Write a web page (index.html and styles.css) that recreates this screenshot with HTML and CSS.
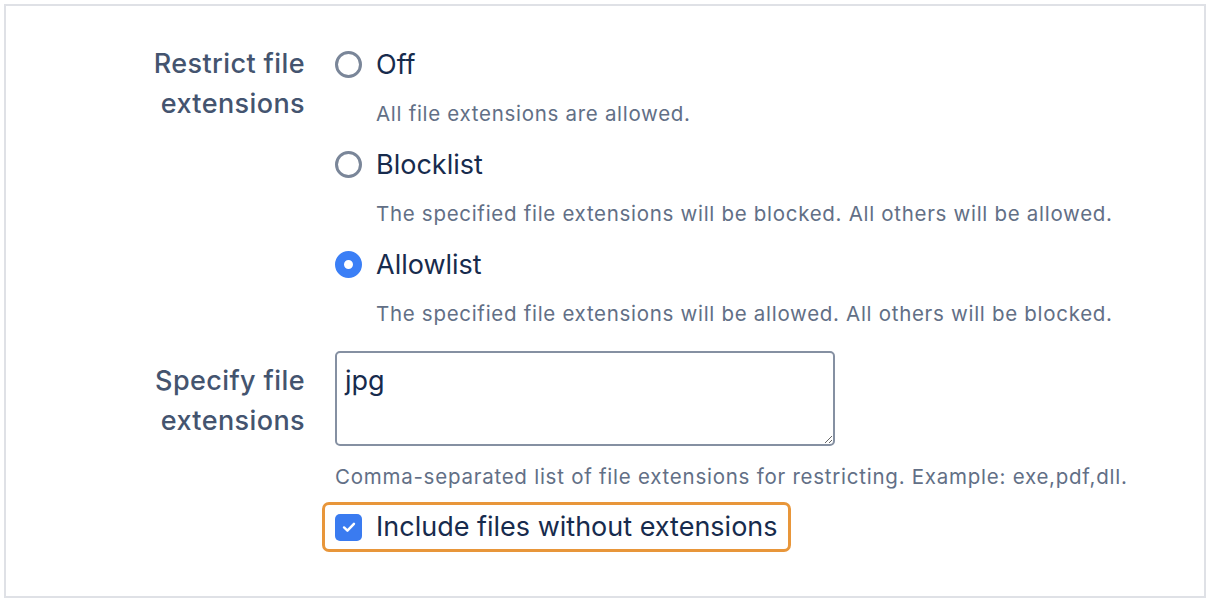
FILE: index.html
```html
<!DOCTYPE html>
<html lang="en">

<head>
    <meta charset="UTF-8">
    <meta name="viewport" content="width=device-width, initial-scale=1.0">
    <title>File extensions</title>

    <link rel="stylesheet" href="styles.css">
</head>

<body>
    <div id="painel">
        <div class="linha">
            <div class="rotulo">Restrict file<br>extensions</div>
            <div class="campo">
                <label class="opcao">
                    <input type="radio" name="restrict" value="off">
                    <span>Off</span>
                </label>
                <div class="descricao">All file extensions are allowed.</div>

                <label class="opcao">
                    <input type="radio" name="restrict" value="blocklist">
                    <span>Blocklist</span>
                </label>
                <div class="descricao">The specified file extensions will be blocked. All others will be allowed.</div>

                <label class="opcao">
                    <input type="radio" name="restrict" value="allowlist" checked>
                    <span>Allowlist</span>
                </label>
                <div class="descricao">The specified file extensions will be allowed. All others will be blocked.</div>
            </div>
        </div>

        <div class="linha linha-extensoes">
            <div class="rotulo rotulo-extensoes">Specify file<br>extensions</div>
            <div class="campo">
                <textarea id="extensoes">jpg</textarea>
                <div class="ajuda">Comma-separated list of file extensions for restricting. Example: exe,pdf,dll.</div>
                <label class="caixa">
                    <span class="marca">
                        <svg width="18" height="18" viewBox="0 0 16 16">
                            <path d="M3.6 8.4 L6.6 11.2 L12.4 5.2" fill="none" stroke="#fff" stroke-width="2.2" stroke-linecap="round" stroke-linejoin="round"/>
                        </svg>
                    </span>
                    <span>Include files without extensions</span>
                </label>
            </div>
        </div>
    </div>
</body>

</html>
```

FILE: styles.css
```css
* {
    box-sizing: border-box;
}

body {
    margin: 0;
    padding: 4px;
    background-color: #fff;
    font-family: Inter, "Noto Sans", sans-serif;
}

#painel {
    height: 594px;
    border: 2px solid #dfe1e6;
    padding-top: 38px;
}

.linha {
    display: grid;
    grid-template-columns: 299px 1fr;
    column-gap: 30px;
}

.linha-extensoes {
    margin-top: 7px;
}

.rotulo {
    text-align: right;
    font-size: 27px;
    font-weight: 500;
    letter-spacing: 0.4px;
    line-height: 40px;
    color: #44546f;
}

.rotulo-extensoes {
    padding-top: 10px;
}

/* opções do radio */
.opcao {
    display: flex;
    align-items: center;
    gap: 14px;
    height: 40px;
    font-size: 27px;
    color: #172b4d;
}

.opcao input {
    appearance: none;
    margin: 0;
    width: 27px;
    height: 27px;
    border: 3px solid #7a8699;
    border-radius: 50%;
    background-color: #fff;
}

.opcao input:checked {
    border: 9px solid #3b7ff6;
}

.descricao {
    margin: 15px 0 15px 41px;
    font-size: 20.5px;
    letter-spacing: 0.7px;
    line-height: 30px;
    color: #626f86;
}

/* campo de extensões */
#extensoes {
    display: block;
    width: 500px;
    height: 95px;
    border: 2px solid #8590a2;
    border-radius: 5px;
    padding: 8px 8px;
    font-family: Inter, "Noto Sans", sans-serif;
    font-size: 27px;
    line-height: 40px;
    color: #172b4d;
    resize: both;
    outline: none;
}

.ajuda {
    margin-top: 16px;
    font-size: 20.5px;
    letter-spacing: 0.75px;
    line-height: 30px;
    color: #626f86;
}

.caixa {
    display: inline-flex;
    align-items: center;
    gap: 14px;
    margin: 10px 0 0 -13px;
    padding: 2px 10px;
    border: 3px solid #e8963a;
    border-radius: 7px;
    font-size: 27px;
    line-height: 40px;
    color: #172b4d;
}

.marca {
    display: flex;
    align-items: center;
    justify-content: center;
    width: 27px;
    height: 27px;
    border-radius: 5px;
    background-color: #3a7bf0;
}
```
